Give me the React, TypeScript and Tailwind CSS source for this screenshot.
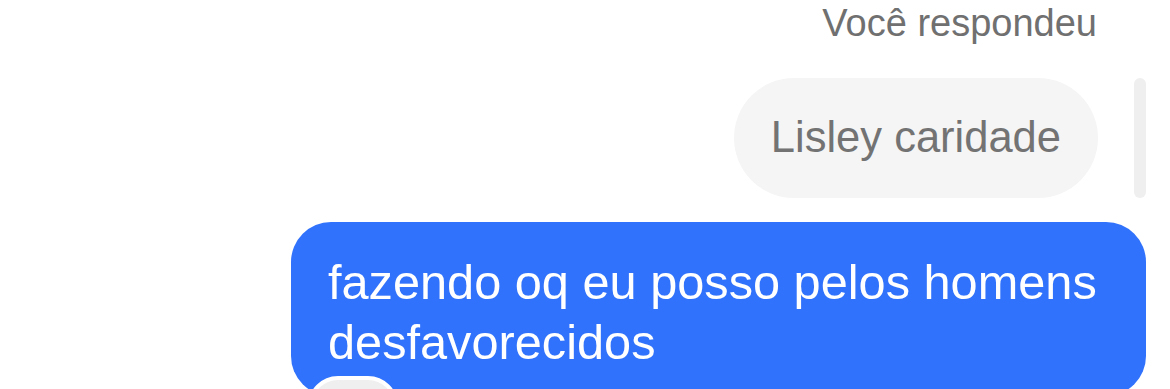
export default function App() {
  return (
    <div
      className="w-[1170px] h-[389px] overflow-hidden bg-white"
      style={{ fontFamily: '"Liberation Sans", Arial, sans-serif' }}
    >
      <div className="flex flex-col items-end pr-[24px]">
        {/* reply header */}
        <div className="pt-[1px] mr-[49px] text-[38px] leading-[44px] text-[#707070]">
          Você respondeu
        </div>

        {/* quoted message + reply bar */}
        <div className="mt-[33px] flex items-stretch gap-[36px]">
          <div className="h-[120px] flex items-center px-[37px] rounded-full bg-[#f5f5f5] text-[43.5px] text-[#737373]">
            Lisley caridade
          </div>
          <div className="w-[12px] rounded-full bg-[#efefef]" />
        </div>

        {/* sent message */}
        <div className="relative mt-[24px] w-[855px] rounded-[40px] bg-[#3072fb] pl-[37px] pr-[20px] pt-[30px] pb-[24px] text-white text-[48.7px] leading-[60px]">
          <p>fazendo oq eu posso pelos homens</p>
          <p>desfavorecidos</p>
          <div className="absolute left-[17px] top-[154px] w-[90px] h-[60px] rounded-full border-[4px] border-white bg-[#efefef]" />
        </div>
      </div>
    </div>
  );
}
